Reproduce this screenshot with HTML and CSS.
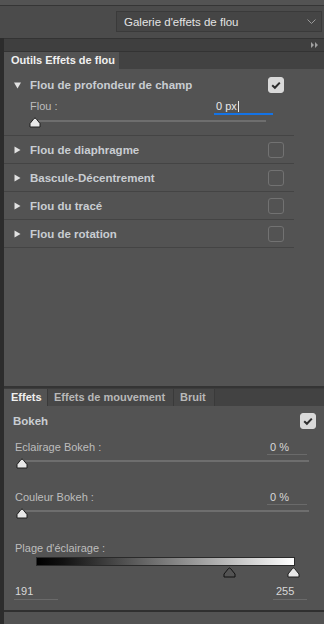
FILE: index.html
```html
<!DOCTYPE html>
<html lang="fr">
<head>
<meta charset="utf-8">
<link rel="stylesheet" href="styles.css">
</head>
<body>
<div class="app">
  <div class="top"></div>
  <div class="header">
    <div class="select">
      <span class="select-text">Galerie d'effets de flou</span>
      <svg class="chev" width="9" height="6" viewBox="0 0 9 6"><path d="M0.5 0.5 L4.5 4.5 L8.5 0.5" fill="none" stroke="#9a9a9a" stroke-width="1"/></svg>
    </div>
  </div>
  <div class="main">
    <div class="edge"></div>
    <div class="panels">
      <div class="collapse">
        <svg class="dbl" width="8" height="6" viewBox="0 0 8 6"><path d="M0 0 L3 3 L0 6 Z M4 0 L7 3 L4 6 Z" fill="#a0a0a0"/></svg>
      </div>
      <div class="tabs">
        <div class="tab active tab-tools">Outils Effets de flou</div>
      </div>
      <div class="tools">
        <div class="group open">
          <div class="ghead">
            <svg class="tri" width="7" height="7" viewBox="0 0 7 7"><path d="M0 0.5 L7 0.5 L3.5 6.5 Z" fill="#e2e2e2"/></svg>
            <span class="gtitle">Flou de profondeur de champ</span>
            <span class="cb checked"><svg width="16" height="16" viewBox="0 0 16 16"><path d="M4.2 8.2 L6.9 10.8 L11.8 5.6" fill="none" stroke="#2e2e2e" stroke-width="2"/></svg></span>
          </div>
          <div class="field field-top">
            <span class="flabel">Flou :</span>
            <span class="fval blue">0 px<span class="caret"></span></span>
          </div>
          <div class="slider slider-top">
            <div class="track"></div>
            <svg class="thumb" width="12" height="11" viewBox="0 0 12 11"><path d="M1 10 L1 6.5 L5 1.5 Q6 0.5 7 1.5 L11 6.5 L11 10 Z" fill="#e8e8e8" stroke="#1e1e1e" stroke-width="1"/></svg>
          </div>
        </div>
        <div class="group">
          <div class="ghead">
            <svg class="tri" width="7" height="8" viewBox="0 0 7 8"><path d="M0.5 0.5 L6.5 4 L0.5 7.5 Z" fill="#e2e2e2"/></svg>
            <span class="gtitle">Flou de diaphragme</span>
            <span class="cb"></span>
          </div>
        </div>
        <div class="group">
          <div class="ghead">
            <svg class="tri" width="7" height="8" viewBox="0 0 7 8"><path d="M0.5 0.5 L6.5 4 L0.5 7.5 Z" fill="#e2e2e2"/></svg>
            <span class="gtitle">Bascule-Décentrement</span>
            <span class="cb"></span>
          </div>
        </div>
        <div class="group">
          <div class="ghead">
            <svg class="tri" width="7" height="8" viewBox="0 0 7 8"><path d="M0.5 0.5 L6.5 4 L0.5 7.5 Z" fill="#e2e2e2"/></svg>
            <span class="gtitle">Flou du tracé</span>
            <span class="cb"></span>
          </div>
        </div>
        <div class="group">
          <div class="ghead">
            <svg class="tri" width="7" height="8" viewBox="0 0 7 8"><path d="M0.5 0.5 L6.5 4 L0.5 7.5 Z" fill="#e2e2e2"/></svg>
            <span class="gtitle">Flou de rotation</span>
            <span class="cb"></span>
          </div>
        </div>
      </div>
      <div class="divider"></div>
      <div class="tabs tabs-bottom">
        <div class="tab active tab-effets">Effets</div>
        <div class="tab tab-mouv">Effets de mouvement</div>
        <div class="tab tab-bruit">Bruit</div>
      </div>
      <div class="effects">
        <div class="ehead">
          <span class="gtitle">Bokeh</span>
          <span class="cb checked"><svg width="16" height="16" viewBox="0 0 16 16"><path d="M4.2 8.2 L6.9 10.8 L11.8 5.6" fill="none" stroke="#2e2e2e" stroke-width="2"/></svg></span>
        </div>
        <div class="field efield">
          <span class="flabel">Eclairage Bokeh :</span>
          <span class="fval">0 %</span>
        </div>
        <div class="slider eslider">
          <div class="track"></div>
          <svg class="thumb" width="12" height="11" viewBox="0 0 12 11"><path d="M1 10 L1 6.5 L5 1.5 Q6 0.5 7 1.5 L11 6.5 L11 10 Z" fill="#e8e8e8" stroke="#1e1e1e" stroke-width="1"/></svg>
        </div>
        <div class="field efield efield-2">
          <span class="flabel">Couleur Bokeh :</span>
          <span class="fval">0 %</span>
        </div>
        <div class="slider eslider">
          <div class="track"></div>
          <svg class="thumb" width="12" height="11" viewBox="0 0 12 11"><path d="M1 10 L1 6.5 L5 1.5 Q6 0.5 7 1.5 L11 6.5 L11 10 Z" fill="#e8e8e8" stroke="#1e1e1e" stroke-width="1"/></svg>
        </div>
        <div class="range-label">Plage d'éclairage :</div>
        <div class="range">
          <div class="gradient"></div>
          <div class="markers">
            <svg class="marker" style="left: 187px" width="13" height="11" viewBox="0 0 13 11"><path d="M1 10 L1 7 L5.5 1.5 Q6.5 0.5 7.5 1.5 L12 7 L12 10 Z" fill="#535353" stroke="#111" stroke-width="1"/></svg>
            <svg class="marker" style="left: 251px" width="13" height="11" viewBox="0 0 13 11"><path d="M1 10 L1 7 L5.5 1.5 Q6.5 0.5 7.5 1.5 L12 7 L12 10 Z" fill="#e8e8e8" stroke="#1e1e1e" stroke-width="1"/></svg>
          </div>
        </div>
        <div class="range-values">
          <span class="rval rval-left">191</span>
          <span class="rval rval-right">255</span>
        </div>
      </div>
      <div class="footer"></div>
    </div>
  </div>
</div>
</body>
</html>
```

FILE: styles.css
```css
* { box-sizing: border-box; }
html, body { margin: 0; padding: 0; }
body {
  width: 324px;
  height: 624px;
  overflow: hidden;
  background: #535353;
  font-family: "Liberation Sans", Arial, sans-serif;
  color: #c8c8c8;
}
.app { display: flex; flex-direction: column; height: 624px; }
.top { height: 5px; flex: none; background: #535353; }
.header {
  height: 33px;
  flex: none;
  border-top: 1px solid #353535;
  background: #4b4b4b;
  display: flex;
  align-items: center;
  justify-content: flex-end;
  padding-right: 2px;
}
.select {
  width: 206px;
  height: 21px;
  margin-top: -1px;
  border: 1px solid #3a3a3a;
  background: #454545;
  display: flex;
  align-items: center;
  padding-left: 7px;
  padding-right: 5px;
}
.select-text { font-size: 11.5px; color: #e4e4e4; flex: 1; white-space: nowrap; }
.chev { display: block; }
.main { flex: 1; display: flex; min-height: 0; }
.edge { width: 4px; flex: none; background: #2c2c2c; }
.panels { flex: 1; display: flex; flex-direction: column; min-width: 0; }
.collapse {
  height: 14px;
  flex: none;
  border-top: 1px solid #333;
  border-bottom: 1px solid #333;
  background: #3f3f3f;
  display: flex;
  align-items: center;
  justify-content: flex-end;
  padding-right: 5px;
}
.dbl { display: block; }
.tabs {
  height: 17px;
  flex: none;
  background: #424242;
  display: flex;
}
.tab {
  font-size: 11px;
  font-weight: bold;
  line-height: 17px;
  white-space: nowrap;
  color: #b8b8b8;
  background: #474747;
  border-right: 1px solid #3a3a3a;
  flex: none;
}
.tab.active { background: #535353; color: #f0f0f0; }
.tab-tools { width: 115px; padding-left: 7px; border-right: none; }
.tab-effets { width: 44px; padding-left: 7px; }
.tab-mouv { width: 126px; padding-left: 6px; }
.tab-bruit { width: 41px; padding-left: 6px; }
.tools {
  height: 317px;
  flex: none;
  padding: 8px 30px 0 0;
}
.group { border-bottom: 1px solid #444; }
.group.open { padding-bottom: 7px; }
.ghead {
  height: 27px;
  display: flex;
  align-items: center;
  padding-left: 10px;
  padding-right: 10px;
}
.group.open .ghead { height: 16px; }
.tri { display: block; margin-right: 9px; }
.gtitle { font-size: 11.5px; font-weight: bold; color: #c9cdd2; white-space: nowrap; }
.cb {
  margin-left: auto;
  width: 16px;
  height: 16px;
  flex: none;
  border: 1px solid #727272;
  border-radius: 3px;
}
.cb.checked { background: #d9d9d9; border-color: #d9d9d9; }
.cb.checked svg { display: block; margin: -1px; }
.divider { height: 3px; flex: none; background: #343434; border-bottom: 1px solid #3c3c3c; }
.field {
  display: flex;
  align-items: flex-end;
  font-size: 11px;
}
.field-top { height: 16px; margin-top: 6px; padding-left: 26px; }
.flabel { color: #bdbdbd; line-height: 14px; align-self: flex-start; white-space: nowrap; }
.fval {
  margin-left: auto;
  line-height: 14px;
  color: #d8d8d8;
  border-bottom: 1px solid #6a6a6a;
}
.fval.blue {
  width: 59px;
  margin-right: 21px;
  padding-left: 2px;
  border-bottom: 2px solid #1473e6;
  color: #e8e8e8;
  display: flex;
  align-items: center;
}
.caret { width: 1px; height: 11px; background: #e8e8e8; margin-left: 1px; }
.slider { position: relative; height: 11px; }
.track { position: absolute; height: 2px; background: #6e6e6e; }
.thumb { position: absolute; top: 0; display: block; }
.slider-top { margin-top: 2px; }
.slider-top .track { left: 31px; width: 231px; top: 3px; }
.slider-top .thumb { left: 25px; }
.effects { flex: 1; padding: 7px 8px 0 9px; }
.ehead { height: 16px; display: flex; align-items: center; }
.efield { height: 15px; margin-top: 11px; padding-left: 2px; }
.efield-2 { margin-top: 21px; }
.efield .fval { width: 40px; padding-left: 3px; margin-right: 9px; }
.eslider { margin-top: 3px; }
.eslider .track { left: 7px; width: 289px; top: 2px; }
.eslider .thumb { left: 3px; }
.range-label {
  margin-top: 22px;
  padding-left: 2px;
  font-size: 11px;
  line-height: 14px;
  color: #bdbdbd;
}
.range { margin-top: 2px; padding-left: 23px; }
.gradient {
  width: 259px;
  height: 9px;
  border: 1px solid #2a2a2a;
  background: linear-gradient(to right, #000 0%, #111 10%, #fff 100%);
}
.markers { position: relative; height: 11px; margin-top: 1px; }
.marker { position: absolute; top: 0; display: block; }
.range-values {
  display: flex;
  justify-content: space-between;
  margin-top: 6px;
  padding-left: 1px;
  padding-right: 9px;
}
.rval {
  font-size: 11px;
  line-height: 15px;
  color: #d8d8d8;
  border-bottom: 1px solid #6a6a6a;
}
.rval-left { width: 44px; padding-left: 1px; }
.rval-right { width: 34px; padding-left: 3px; }
.footer { height: 14px; flex: none; border-top: 2px solid #2f2f2f; }
```
